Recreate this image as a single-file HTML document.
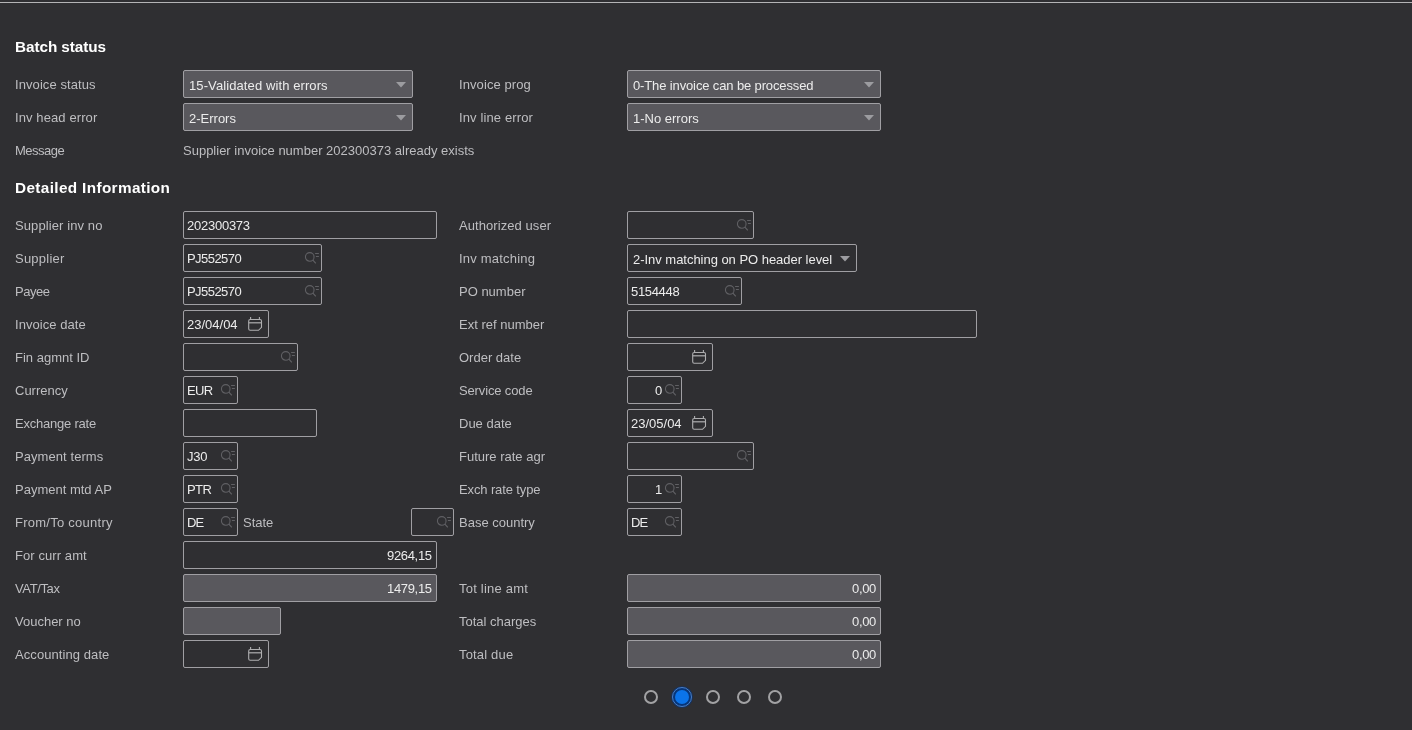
<!DOCTYPE html>
<html><head><meta charset="utf-8"><style>
html,body{margin:0;padding:0;}
body{-webkit-font-smoothing:antialiased;width:1412px;height:730px;background:#2f2f32;position:relative;overflow:hidden;font-family:"Liberation Sans",sans-serif;}
.topline{position:absolute;left:0;top:2px;width:1412px;height:1px;background:#b4b4b6;}
.topdark{position:absolute;left:0;top:0;width:1412px;height:2px;background:#2b2b2d;}
.h{position:absolute;will-change:transform;color:#ffffff;font-weight:bold;line-height:20px;white-space:nowrap;}
.lbl{position:absolute;will-change:transform;color:#bebec1;font-size:13px;line-height:28px;margin-top:1px;white-space:nowrap;}
.box{position:absolute;height:28px;box-sizing:border-box;border:1px solid #a09fa3;border-radius:2px;background:#2f2f32;}
.box.fill{background:#59585d;}
.t{position:absolute;will-change:transform;top:1px;line-height:26px;font-size:13px;color:#ececec;white-space:nowrap;}
.icw{position:absolute;display:block;line-height:0;}
.ic{display:block;}
.arw{position:absolute;right:6px;top:11px;line-height:0;}
.ar{display:block;}
.dot{position:absolute;width:14px;height:14px;box-sizing:border-box;border:2px solid #a2a2a4;border-radius:50%;}
.dsel{position:absolute;width:20px;height:20px;box-sizing:border-box;border-radius:50%;border:1.5px solid #4a7fc6;background:#07367a;box-shadow:0 0 0 0.8px rgba(8,52,120,0.7);}
.dsel::after{content:"";position:absolute;left:1.5px;top:1.5px;width:14px;height:14px;border-radius:50%;background:#0b74ea;}
</style></head>
<body><div class="topline"></div>
<div class="h" style="left:15px;top:37px;font-size:15.3px;letter-spacing:-0.07px">Batch status</div><div class="h" style="left:15px;top:178px;font-size:15.3px;letter-spacing:0.37px">Detailed Information</div><div class="lbl" style="left:15px;top:70px;letter-spacing:0.08px;">Invoice status</div><div class="box dd fill" style="left:183px;top:70px;width:230px"><span class="t" style="left:5px;top:2px;letter-spacing:0.1px;">15-Validated with errors</span><span class="arw"><svg class="ar" width="10" height="6" viewBox="0 0 10 6"><path d="M0 0 H10 L5 5.5 Z" fill="#9c9ca0"/></svg></span></div><div class="lbl" style="left:459px;top:70px;letter-spacing:0.09px;">Invoice prog</div><div class="box dd fill" style="left:627px;top:70px;width:254px"><span class="t" style="left:5px;top:2px;letter-spacing:-0.13px;">0-The invoice can be processed</span><span class="arw"><svg class="ar" width="10" height="6" viewBox="0 0 10 6"><path d="M0 0 H10 L5 5.5 Z" fill="#9c9ca0"/></svg></span></div><div class="lbl" style="left:15px;top:103px;letter-spacing:0.1px;">Inv head error</div><div class="box dd fill" style="left:183px;top:103px;width:230px"><span class="t" style="left:5px;top:2px;">2-Errors</span><span class="arw"><svg class="ar" width="10" height="6" viewBox="0 0 10 6"><path d="M0 0 H10 L5 5.5 Z" fill="#9c9ca0"/></svg></span></div><div class="lbl" style="left:459px;top:103px;letter-spacing:0.12px;">Inv line error</div><div class="box dd fill" style="left:627px;top:103px;width:254px"><span class="t" style="left:5px;top:2px;">1-No errors</span><span class="arw"><svg class="ar" width="10" height="6" viewBox="0 0 10 6"><path d="M0 0 H10 L5 5.5 Z" fill="#9c9ca0"/></svg></span></div><div class="lbl" style="left:15px;top:136px;letter-spacing:-0.5px;">Message</div><div class="lbl" style="left:183px;top:136px">Supplier invoice number 202300373 already exists</div><div class="lbl" style="left:15px;top:211px;letter-spacing:0.1px;">Supplier inv no</div><div class="box" style="left:183px;top:211px;width:254px"><span class="t" style="left:3px;letter-spacing:-0.25px;">202300373</span></div><div class="lbl" style="left:15px;top:244px;letter-spacing:0.23px;">Supplier</div><div class="box" style="left:183px;top:244px;width:139px"><span class="t" style="left:3px;letter-spacing:-0.55px;">PJ552570</span><span class="icw" style="right:0px;top:3px"><svg class="ic" width="18" height="18" viewBox="0 0 18 18"><circle cx="6.75" cy="8.95" r="4.3" fill="none" stroke="#606064" stroke-width="1.1"/><path d="M9.9 12.1 L12.8 15.4" stroke="#606064" stroke-width="1.2"/><path d="M12.1 5.5 H15.9 M12.9 8.5 H15.9" stroke="#606064" stroke-width="1"/></svg></span></div><div class="lbl" style="left:15px;top:277px;letter-spacing:-0.45px;">Payee</div><div class="box" style="left:183px;top:277px;width:139px"><span class="t" style="left:3px;letter-spacing:-0.55px;">PJ552570</span><span class="icw" style="right:0px;top:3px"><svg class="ic" width="18" height="18" viewBox="0 0 18 18"><circle cx="6.75" cy="8.95" r="4.3" fill="none" stroke="#606064" stroke-width="1.1"/><path d="M9.9 12.1 L12.8 15.4" stroke="#606064" stroke-width="1.2"/><path d="M12.1 5.5 H15.9 M12.9 8.5 H15.9" stroke="#606064" stroke-width="1"/></svg></span></div><div class="lbl" style="left:15px;top:310px;letter-spacing:0.06px;">Invoice date</div><div class="box" style="left:183px;top:310px;width:86px"><span class="t" style="left:3px;">23/04/04</span><span class="icw" style="right:0px;top:3px"><svg class="ic" width="22" height="20" viewBox="0 0 22 20"><path d="M4.2 5.5 H14 Q15.5 5.5 15.5 7 V13.3 L12.5 16.3 H4.2 Q2.7 16.3 2.7 14.8 V7 Q2.7 5.5 4.2 5.5 Z" fill="none" stroke="#aeaeb0" stroke-width="1.1"/><path d="M2.7 8.8 H15.5" stroke="#aeaeb0" stroke-width="1.2"/><path d="M4.6 3 V5.5 M13.4 3 V5.5" stroke="#aeaeb0" stroke-width="1.1"/></svg></span></div><div class="lbl" style="left:15px;top:343px;">Fin agmnt ID</div><div class="box" style="left:183px;top:343px;width:115px"><span class="icw" style="right:0px;top:3px"><svg class="ic" width="18" height="18" viewBox="0 0 18 18"><circle cx="6.75" cy="8.95" r="4.3" fill="none" stroke="#606064" stroke-width="1.1"/><path d="M9.9 12.1 L12.8 15.4" stroke="#606064" stroke-width="1.2"/><path d="M12.1 5.5 H15.9 M12.9 8.5 H15.9" stroke="#606064" stroke-width="1"/></svg></span></div><div class="lbl" style="left:15px;top:376px;">Currency</div><div class="box" style="left:183px;top:376px;width:55px"><span class="t" style="left:3px;letter-spacing:-0.65px;">EUR</span><span class="icw" style="right:0px;top:3px"><svg class="ic" width="18" height="18" viewBox="0 0 18 18"><circle cx="6.75" cy="8.95" r="4.3" fill="none" stroke="#606064" stroke-width="1.1"/><path d="M9.9 12.1 L12.8 15.4" stroke="#606064" stroke-width="1.2"/><path d="M12.1 5.5 H15.9 M12.9 8.5 H15.9" stroke="#606064" stroke-width="1"/></svg></span></div><div class="lbl" style="left:15px;top:409px;letter-spacing:-0.22px;">Exchange rate</div><div class="box" style="left:183px;top:409px;width:134px"></div><div class="lbl" style="left:15px;top:442px;letter-spacing:0.07px;">Payment terms</div><div class="box" style="left:183px;top:442px;width:55px"><span class="t" style="left:3px;letter-spacing:-0.3px;">J30</span><span class="icw" style="right:0px;top:3px"><svg class="ic" width="18" height="18" viewBox="0 0 18 18"><circle cx="6.75" cy="8.95" r="4.3" fill="none" stroke="#606064" stroke-width="1.1"/><path d="M9.9 12.1 L12.8 15.4" stroke="#606064" stroke-width="1.2"/><path d="M12.1 5.5 H15.9 M12.9 8.5 H15.9" stroke="#606064" stroke-width="1"/></svg></span></div><div class="lbl" style="left:15px;top:475px;">Payment mtd AP</div><div class="box" style="left:183px;top:475px;width:55px"><span class="t" style="left:3px;letter-spacing:-0.6px;">PTR</span><span class="icw" style="right:0px;top:3px"><svg class="ic" width="18" height="18" viewBox="0 0 18 18"><circle cx="6.75" cy="8.95" r="4.3" fill="none" stroke="#606064" stroke-width="1.1"/><path d="M9.9 12.1 L12.8 15.4" stroke="#606064" stroke-width="1.2"/><path d="M12.1 5.5 H15.9 M12.9 8.5 H15.9" stroke="#606064" stroke-width="1"/></svg></span></div><div class="lbl" style="left:15px;top:508px;letter-spacing:0.26px;">From/To country</div><div class="box" style="left:183px;top:508px;width:55px"><span class="t" style="left:3px;letter-spacing:-1.0px;">DE</span><span class="icw" style="right:0px;top:3px"><svg class="ic" width="18" height="18" viewBox="0 0 18 18"><circle cx="6.75" cy="8.95" r="4.3" fill="none" stroke="#606064" stroke-width="1.1"/><path d="M9.9 12.1 L12.8 15.4" stroke="#606064" stroke-width="1.2"/><path d="M12.1 5.5 H15.9 M12.9 8.5 H15.9" stroke="#606064" stroke-width="1"/></svg></span></div><div class="lbl" style="left:243px;top:508px;">State</div><div class="box" style="left:411px;top:508px;width:43px"><span class="icw" style="right:0px;top:3px"><svg class="ic" width="18" height="18" viewBox="0 0 18 18"><circle cx="6.75" cy="8.95" r="4.3" fill="none" stroke="#606064" stroke-width="1.1"/><path d="M9.9 12.1 L12.8 15.4" stroke="#606064" stroke-width="1.2"/><path d="M12.1 5.5 H15.9 M12.9 8.5 H15.9" stroke="#606064" stroke-width="1"/></svg></span></div><div class="lbl" style="left:15px;top:541px;letter-spacing:0.08px;">For curr amt</div><div class="box" style="left:183px;top:541px;width:254px"><span class="t" style="right:3.93px;letter-spacing:-0.33px;">9264,15</span></div><div class="lbl" style="left:15px;top:574px;letter-spacing:-0.38px;">VAT/Tax</div><div class="box fill" style="left:183px;top:574px;width:254px"><span class="t" style="right:3.93px;letter-spacing:-0.33px;">1479,15</span></div><div class="lbl" style="left:15px;top:607px;">Voucher no</div><div class="box fill" style="left:183px;top:607px;width:98px"></div><div class="lbl" style="left:15px;top:640px;letter-spacing:0.08px;">Accounting date</div><div class="box" style="left:183px;top:640px;width:86px"><span class="icw" style="right:0px;top:3px"><svg class="ic" width="22" height="20" viewBox="0 0 22 20"><path d="M4.2 5.5 H14 Q15.5 5.5 15.5 7 V13.3 L12.5 16.3 H4.2 Q2.7 16.3 2.7 14.8 V7 Q2.7 5.5 4.2 5.5 Z" fill="none" stroke="#aeaeb0" stroke-width="1.1"/><path d="M2.7 8.8 H15.5" stroke="#aeaeb0" stroke-width="1.2"/><path d="M4.6 3 V5.5 M13.4 3 V5.5" stroke="#aeaeb0" stroke-width="1.1"/></svg></span></div><div class="lbl" style="left:459px;top:211px;letter-spacing:0.07px;">Authorized user</div><div class="box" style="left:627px;top:211px;width:127px"><span class="icw" style="right:0px;top:3px"><svg class="ic" width="18" height="18" viewBox="0 0 18 18"><circle cx="6.75" cy="8.95" r="4.3" fill="none" stroke="#606064" stroke-width="1.1"/><path d="M9.9 12.1 L12.8 15.4" stroke="#606064" stroke-width="1.2"/><path d="M12.1 5.5 H15.9 M12.9 8.5 H15.9" stroke="#606064" stroke-width="1"/></svg></span></div><div class="lbl" style="left:459px;top:244px;letter-spacing:0.2px;">Inv matching</div><div class="box dd" style="left:627px;top:244px;width:230px"><span class="t" style="left:5px;top:2px;letter-spacing:-0.03px;">2-Inv matching on PO header level</span><span class="arw"><svg class="ar" width="10" height="6" viewBox="0 0 10 6"><path d="M0 0 H10 L5 5.5 Z" fill="#9c9ca0"/></svg></span></div><div class="lbl" style="left:459px;top:277px;">PO number</div><div class="box" style="left:627px;top:277px;width:115px"><span class="t" style="left:3px;letter-spacing:-0.33px;">5154448</span><span class="icw" style="right:0px;top:3px"><svg class="ic" width="18" height="18" viewBox="0 0 18 18"><circle cx="6.75" cy="8.95" r="4.3" fill="none" stroke="#606064" stroke-width="1.1"/><path d="M9.9 12.1 L12.8 15.4" stroke="#606064" stroke-width="1.2"/><path d="M12.1 5.5 H15.9 M12.9 8.5 H15.9" stroke="#606064" stroke-width="1"/></svg></span></div><div class="lbl" style="left:459px;top:310px;">Ext ref number</div><div class="box" style="left:627px;top:310px;width:350px"></div><div class="lbl" style="left:459px;top:343px;">Order date</div><div class="box" style="left:627px;top:343px;width:86px"><span class="icw" style="right:0px;top:3px"><svg class="ic" width="22" height="20" viewBox="0 0 22 20"><path d="M4.2 5.5 H14 Q15.5 5.5 15.5 7 V13.3 L12.5 16.3 H4.2 Q2.7 16.3 2.7 14.8 V7 Q2.7 5.5 4.2 5.5 Z" fill="none" stroke="#aeaeb0" stroke-width="1.1"/><path d="M2.7 8.8 H15.5" stroke="#aeaeb0" stroke-width="1.2"/><path d="M4.6 3 V5.5 M13.4 3 V5.5" stroke="#aeaeb0" stroke-width="1.1"/></svg></span></div><div class="lbl" style="left:459px;top:376px;letter-spacing:-0.14px;">Service code</div><div class="box" style="left:627px;top:376px;width:55px"><span class="t" style="right:18.5px;">0</span><span class="icw" style="right:0px;top:3px"><svg class="ic" width="18" height="18" viewBox="0 0 18 18"><circle cx="6.75" cy="8.95" r="4.3" fill="none" stroke="#606064" stroke-width="1.1"/><path d="M9.9 12.1 L12.8 15.4" stroke="#606064" stroke-width="1.2"/><path d="M12.1 5.5 H15.9 M12.9 8.5 H15.9" stroke="#606064" stroke-width="1"/></svg></span></div><div class="lbl" style="left:459px;top:409px;">Due date</div><div class="box" style="left:627px;top:409px;width:86px"><span class="t" style="left:3px;">23/05/04</span><span class="icw" style="right:0px;top:3px"><svg class="ic" width="22" height="20" viewBox="0 0 22 20"><path d="M4.2 5.5 H14 Q15.5 5.5 15.5 7 V13.3 L12.5 16.3 H4.2 Q2.7 16.3 2.7 14.8 V7 Q2.7 5.5 4.2 5.5 Z" fill="none" stroke="#aeaeb0" stroke-width="1.1"/><path d="M2.7 8.8 H15.5" stroke="#aeaeb0" stroke-width="1.2"/><path d="M4.6 3 V5.5 M13.4 3 V5.5" stroke="#aeaeb0" stroke-width="1.1"/></svg></span></div><div class="lbl" style="left:459px;top:442px;">Future rate agr</div><div class="box" style="left:627px;top:442px;width:127px"><span class="icw" style="right:0px;top:3px"><svg class="ic" width="18" height="18" viewBox="0 0 18 18"><circle cx="6.75" cy="8.95" r="4.3" fill="none" stroke="#606064" stroke-width="1.1"/><path d="M9.9 12.1 L12.8 15.4" stroke="#606064" stroke-width="1.2"/><path d="M12.1 5.5 H15.9 M12.9 8.5 H15.9" stroke="#606064" stroke-width="1"/></svg></span></div><div class="lbl" style="left:459px;top:475px;letter-spacing:-0.12px;">Exch rate type</div><div class="box" style="left:627px;top:475px;width:55px"><span class="t" style="right:18.5px;">1</span><span class="icw" style="right:0px;top:3px"><svg class="ic" width="18" height="18" viewBox="0 0 18 18"><circle cx="6.75" cy="8.95" r="4.3" fill="none" stroke="#606064" stroke-width="1.1"/><path d="M9.9 12.1 L12.8 15.4" stroke="#606064" stroke-width="1.2"/><path d="M12.1 5.5 H15.9 M12.9 8.5 H15.9" stroke="#606064" stroke-width="1"/></svg></span></div><div class="lbl" style="left:459px;top:508px;">Base country</div><div class="box" style="left:627px;top:508px;width:55px"><span class="t" style="left:3px;letter-spacing:-1.0px;">DE</span><span class="icw" style="right:0px;top:3px"><svg class="ic" width="18" height="18" viewBox="0 0 18 18"><circle cx="6.75" cy="8.95" r="4.3" fill="none" stroke="#606064" stroke-width="1.1"/><path d="M9.9 12.1 L12.8 15.4" stroke="#606064" stroke-width="1.2"/><path d="M12.1 5.5 H15.9 M12.9 8.5 H15.9" stroke="#606064" stroke-width="1"/></svg></span></div><div class="lbl" style="left:459px;top:574px;letter-spacing:0.22px;">Tot line amt</div><div class="box fill" style="left:627px;top:574px;width:254px"><span class="t" style="right:3.93px;letter-spacing:-0.33px;">0,00</span></div><div class="lbl" style="left:459px;top:607px;">Total charges</div><div class="box fill" style="left:627px;top:607px;width:254px"><span class="t" style="right:3.93px;letter-spacing:-0.33px;">0,00</span></div><div class="lbl" style="left:459px;top:640px;letter-spacing:0.17px;">Total due</div><div class="box fill" style="left:627px;top:640px;width:254px"><span class="t" style="right:3.93px;letter-spacing:-0.33px;">0,00</span></div><div class="dot" style="left:644px;top:690px"></div><div class="dsel" style="left:672px;top:687px"></div><div class="dot" style="left:706px;top:690px"></div><div class="dot" style="left:737px;top:690px"></div><div class="dot" style="left:768px;top:690px"></div>
</body></html>
